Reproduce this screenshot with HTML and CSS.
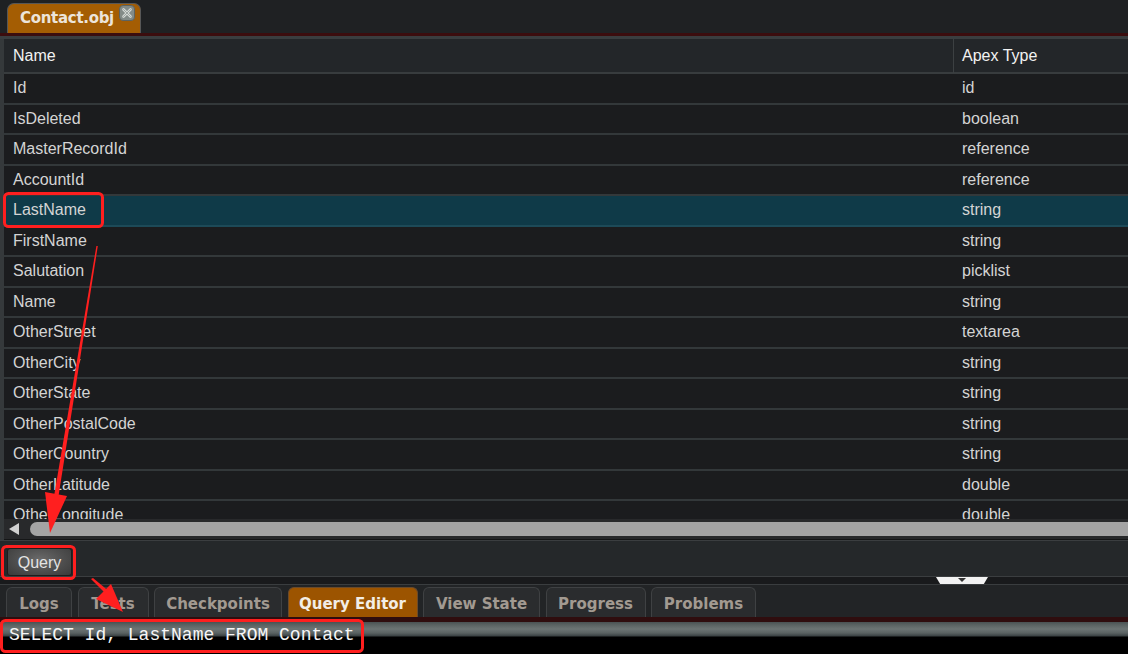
FILE: index.html
```html
<!DOCTYPE html>
<html>
<head>
<meta charset="utf-8">
<link rel="stylesheet" href="styles.css">
</head>
<body>
<div class="app">
  <div class="topbar">
    <div class="doc-tab">
      <span class="doc-tab-label">Contact.obj</span>
      <svg class="close-ico" width="16" height="16" viewBox="0 0 16 16">
        <rect x="0.5" y="0.5" width="15" height="15" rx="3.5" fill="#838b87" stroke="#5d6361"/>
        <path d="M4.5 4.5 L11.5 11.5 M11.5 4.5 L4.5 11.5" stroke="#d4d8d4" stroke-width="2.6" stroke-linecap="round"/>
        <path d="M4.5 4.5 L11.5 11.5 M11.5 4.5 L4.5 11.5" stroke="#9aa29e" stroke-width="1" stroke-linecap="round"/>
      </svg>
    </div>
  </div>
  <div class="redline"></div>
  <div class="gapline"></div>

  <div class="grid">
    <div class="grid-head">
      <div class="hcell hcell-name">Name</div>
      <div class="hcell">Apex Type</div>
    </div>
    <div class="grid-body">
      <div class="row"><div class="cell">Id</div><div class="cell">id</div></div>
      <div class="row"><div class="cell">IsDeleted</div><div class="cell">boolean</div></div>
      <div class="row"><div class="cell">MasterRecordId</div><div class="cell">reference</div></div>
      <div class="row"><div class="cell">AccountId</div><div class="cell">reference</div></div>
      <div class="row row-sel"><div class="cell">LastName</div><div class="cell">string</div></div>
      <div class="row"><div class="cell">FirstName</div><div class="cell">string</div></div>
      <div class="row"><div class="cell">Salutation</div><div class="cell">picklist</div></div>
      <div class="row"><div class="cell">Name</div><div class="cell">string</div></div>
      <div class="row"><div class="cell">OtherStreet</div><div class="cell">textarea</div></div>
      <div class="row"><div class="cell">OtherCity</div><div class="cell">string</div></div>
      <div class="row"><div class="cell">OtherState</div><div class="cell">string</div></div>
      <div class="row"><div class="cell">OtherPostalCode</div><div class="cell">string</div></div>
      <div class="row"><div class="cell">OtherCountry</div><div class="cell">string</div></div>
      <div class="row"><div class="cell">OtherLatitude</div><div class="cell">double</div></div>
      <div class="row"><div class="cell">OtherLongitude</div><div class="cell">double</div></div>
    </div>
    <div class="hscroll">
      <svg class="hscroll-arrow" width="12" height="14" viewBox="0 0 12 14"><path d="M11 1 L11 13 L1 7 Z" fill="#d0d0d0"/></svg>
      <div class="hscroll-thumb"></div>
    </div>
  </div>

  <div class="query-panel">
    <div class="query-btn">Query</div>
  </div>

  <div class="splitter">
    <div class="splitter-handle"><span class="splitter-tri"></span></div>
  </div>

  <div class="tabs">
    <div class="tab tab-logs">Logs</div>
    <div class="tab tab-tests">Tests</div>
    <div class="tab tab-check">Checkpoints</div>
    <div class="tab tab-active">Query Editor</div>
    <div class="tab tab-view">View State</div>
    <div class="tab tab-prog">Progress</div>
    <div class="tab tab-prob">Problems</div>
  </div>
  <div class="redline redline-bottom"></div>
  <div class="editor">SELECT Id, LastName FROM Contact</div>
</div>

<svg class="annot" width="1128" height="654" viewBox="0 0 1128 654">
  <rect x="4.5" y="193.5" width="98" height="33" rx="4" fill="none" stroke="#ff1f1f" stroke-width="3"/>
  <rect x="2.5" y="546.5" width="72" height="32" rx="4" fill="none" stroke="#ff1f1f" stroke-width="3"/>
  <rect x="1.5" y="620.5" width="361" height="31" rx="4" fill="none" stroke="#ff1f1f" stroke-width="3"/>
  <polygon points="96.4,246 97.8,246 58.2,498 53.8,497.4" fill="#ff1f1f"/>
  <polygon points="50,533 45,492 67,496" fill="#ff1f1f"/>
  <polygon points="91,579 93,578 111,593 108,596" fill="#ff1f1f"/>
  <polygon points="123,612 96,599 111,584" fill="#ff1f1f"/>
</svg>
</body>
</html>
```

FILE: styles.css
```css
* { box-sizing: border-box; }
html, body {
  margin: 0;
  padding: 0;
}
body {
  width: 1128px;
  height: 654px;
  overflow: hidden;
  background: #1f2123;
  font-family: "Liberation Sans", Arial, sans-serif;
  position: relative;
}
.app {
  display: flex;
  flex-direction: column;
  width: 1128px;
  height: 654px;
}
.topbar {
  height: 33px;
  padding: 3px 0 0 7px;
  display: flex;
  align-items: flex-end;
  background: #1f2123;
}
.doc-tab {
  width: 134px;
  height: 30px;
  background: #a45d03;
  border: 1px solid #575757;
  border-bottom: none;
  border-radius: 7px 7px 0 0;
  display: flex;
  align-items: flex-start;
  padding: 0 0 0 12px;
  gap: 5px;
}
.doc-tab-label {
  font-family: "DejaVu Sans", sans-serif;
  font-weight: bold;
  font-size: 15px;
  color: #ece4da;
  line-height: 29px;
  letter-spacing: -0.3px;
}
.close-ico {
  margin-top: 1px;
}
.redline {
  height: 3px;
  background: #3b0d0e;
}
.gapline {
  height: 3px;
  background: #3a3e40;
}
.grid {
  border-left: 4px solid #35393b;
  display: flex;
  flex-direction: column;
}
.grid-head {
  display: grid;
  grid-template-columns: 950px 1fr;
  height: 35px;
  background: #232629;
  border-bottom: 2px solid #383c3e;
}
.hcell {
  color: #f2f2f2;
  font-size: 16px;
  line-height: 34px;
  padding-left: 8px;
}
.hcell-name {
  padding-left: 9px;
  border-right: 1px solid #3c4042;
}
.grid-body {
  height: 445px;
  overflow: hidden;
  background: #1b1c1e;
}
.row {
  display: grid;
  grid-template-columns: 950px 1fr;
  height: 30.5px;
  border-bottom: 2px solid #33383a;
  background: #1b1c1e;
}
.row-sel {
  background: #0f3a48;
  border-bottom: 2px solid #1d4a58;
}
.cell {
  color: #d4d4d4;
  font-size: 16px;
  line-height: 27px;
  padding-left: 9px;
  white-space: nowrap;
}
.cell + .cell {
  padding-left: 8px;
}
.hscroll {
  height: 21px;
  background: #28292b;
  border-bottom: 1px solid #151617;
  display: flex;
  align-items: center;
  padding-left: 4px;
  gap: 10px;
}
.hscroll-arrow {
  flex: none;
}
.hscroll-thumb {
  flex: 1;
  height: 14px;
  background: #a4a4a4;
  border-radius: 7px 0 0 7px;
}
.query-panel {
  height: 37px;
  background: #25282a;
  border-top: 1px solid #3b3e40;
  border-bottom: 1px solid #3b3e40;
  padding: 7px 0 0 7px;
}
.query-btn {
  width: 65px;
  height: 28px;
  border: 1px solid #1d1d1d;
  border-radius: 3px;
  background: radial-gradient(ellipse at 50% 40%, #6a6a6a 0%, #4e4e4e 55%, #3a3a3a 100%);
  color: #e4e4e4;
  font-size: 16px;
  line-height: 27px;
  text-align: center;
}
.splitter {
  height: 8px;
  background: #191a1c;
  border-bottom: 1px solid #3a3d3f;
  display: flex;
}
.splitter-handle {
  margin-left: 936px;
  width: 52px;
  height: 7px;
  background: #f2f2f2;
  clip-path: polygon(0 0, 100% 0, 92% 100%, 8% 100%);
  display: flex;
  justify-content: center;
}
.splitter-tri {
  width: 0;
  height: 0;
  border-left: 4px solid transparent;
  border-right: 4px solid transparent;
  border-top: 4px solid #333;
  margin-top: 1px;
}
.tabs {
  height: 32px;
  background: #222426;
  display: flex;
  align-items: flex-end;
  gap: 5.5px;
  padding-left: 6px;
}
.tab {
  height: 30px;
  padding-top: 3px;
  border: 1px solid #3f4143;
  border-bottom: none;
  border-radius: 6px 6px 0 0;
  background: #2a2c2e;
  font-family: "DejaVu Sans", sans-serif;
  font-weight: bold;
  font-size: 15px;
  line-height: 27px;
  color: #a29a91;
  white-space: nowrap;
  text-align: center;
  flex: none;
}
.tab-logs { width: 66px; }
.tab-tests { width: 71px; }
.tab-check { width: 128px; }
.tab-view { width: 117px; }
.tab-prog { width: 100px; }
.tab-prob { width: 105px; }
.tab-active {
  width: 130px;
  background: #9c5400;
  color: #f3ede5;
  border-color: #6b4a2a;
}
.redline-bottom {
  height: 5px;
  background: #2f0d0e;
}
.editor {
  flex: 1;
  background:
    linear-gradient(#4a5253 0px, #5b6363 3px, #6c7474 7px, #5a6262 11px, #3a4143 14px, #000 15px, #000 100%);
  color: #f6f6f6;
  font-family: "Liberation Mono", "Courier New", monospace;
  font-size: 18px;
  line-height: 24px;
  padding: 1px 0 0 9px;
  white-space: pre;
}
.annot {
  position: absolute;
  left: 0;
  top: 0;
  pointer-events: none;
}
```
